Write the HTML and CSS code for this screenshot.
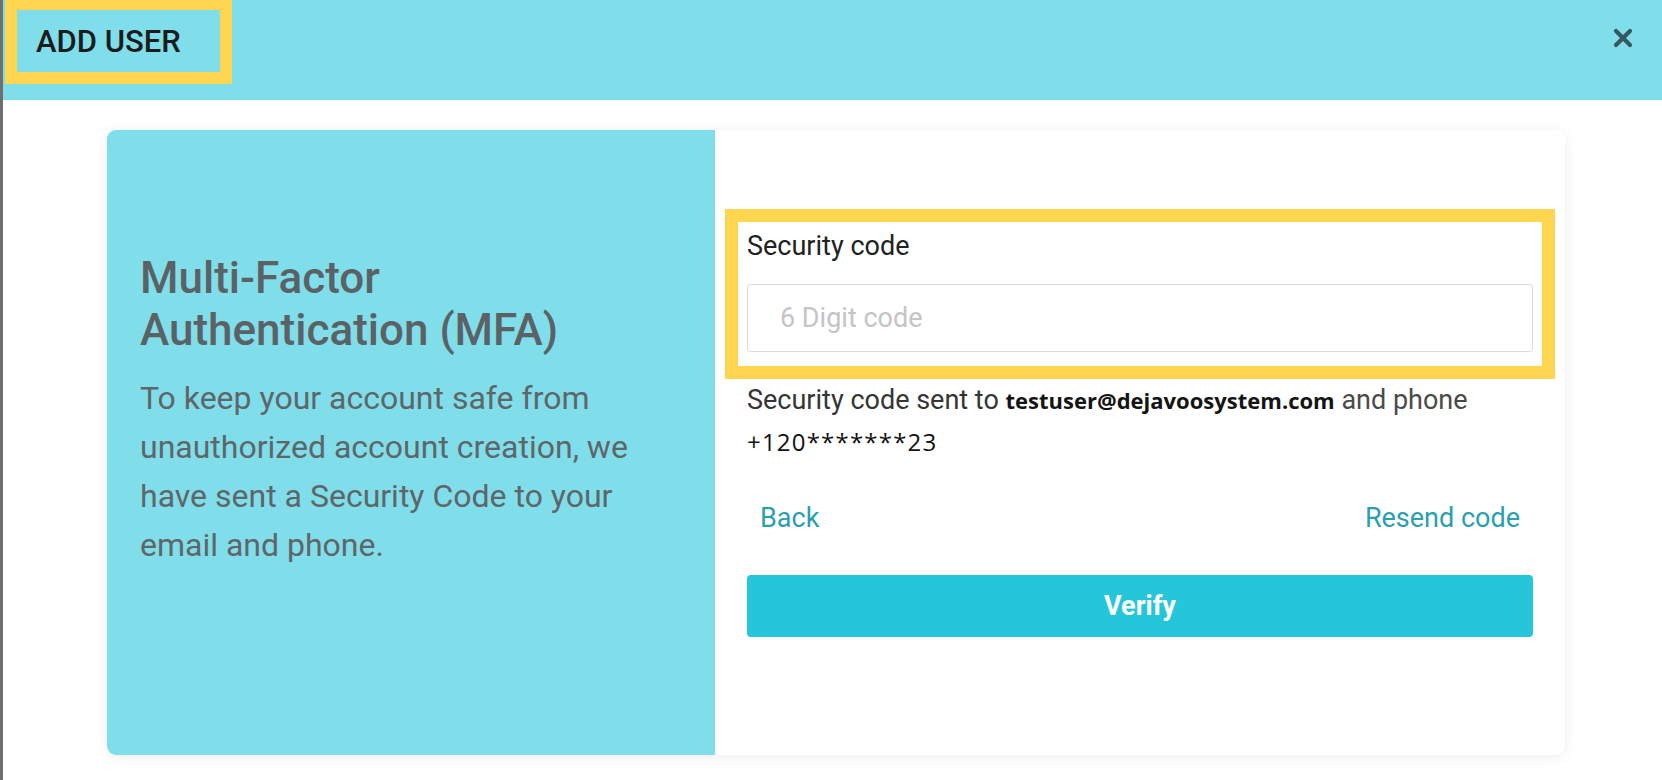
FILE: index.html
```html
<!DOCTYPE html>
<html lang="en">
<head>
    <meta charset="UTF-8">
    <meta name="viewport" content="width=device-width, initial-scale=1.0">
    <title>Add User</title>
    <link rel="stylesheet" href="styles.css">
</head>
<body>
    <div class="modal">
        <header class="modal-header">
            <h1 class="modal-title">ADD USER</h1>
            <button class="close-btn" aria-label="Close">
                <svg width="20" height="20" viewBox="0 0 20 20">
                    <path d="M3 3 L17 17 M17 3 L3 17" stroke="currentColor" stroke-width="4.2" stroke-linecap="round"/>
                </svg>
            </button>
        </header>
        <div class="modal-body">
            <div class="mfa-card">
                <section class="mfa-info">
                    <h2>Multi-Factor Authentication (MFA)</h2>
                    <p>To keep your account safe from unauthorized account creation, we have sent a Security Code to your email and phone.</p>
                </section>
                <section class="mfa-form">
                    <div class="form-group">
                        <label for="code">Security code</label>
                        <input type="text" id="code" placeholder="6 Digit code">
                    </div>
                    <p class="sent-note">Security code sent to <strong>testuser@dejavoosystem.com</strong> <span class="muted">and phone</span> <span class="phone">+120*******23</span></p>
                    <div class="link-row">
                        <a href="#">Back</a>
                        <a href="#">Resend code</a>
                    </div>
                    <button class="verify-btn">Verify</button>
                </section>
            </div>
        </div>
    </div>
</body>
</html>
```

FILE: styles.css
```css
html, body {
    margin: 0;
    height: 780px;
    overflow: hidden;
}
body {
    font-family: Roboto, "Liberation Sans", sans-serif;
    background-color: #fff;
    border-left: 3px solid #6f6f6f;
}
.modal-header {
    height: 100px;
    box-sizing: border-box;
    background-color: #80deea;
    display: flex;
    justify-content: space-between;
    align-items: flex-start;
    padding: 10px 29px 0 14px;
}
.modal-title {
    margin: 0;
    width: 203px;
    height: 62px;
    box-sizing: border-box;
    padding-left: 19px;
    display: flex;
    align-items: center;
    font-size: 31px;
    font-weight: 500;
    color: #1c1c1c;
    outline: 12px solid #fdd54f;
}
.close-btn {
    margin-top: 18px;
    padding: 0;
    border: none;
    background: none;
    color: #37575f;
    width: 20px;
    height: 20px;
    cursor: pointer;
}
.close-btn svg {
    display: block;
}
.modal-body {
    padding: 30px 97px 0 104px;
}
.mfa-card {
    display: flex;
    height: 625px;
    border-radius: 9px;
    background-color: #fff;
    box-shadow: 0 2px 14px rgba(0, 0, 0, 0.07);
    overflow: hidden;
}
.mfa-info {
    width: 608px;
    box-sizing: border-box;
    background-color: #80deea;
    padding: 122px 30px 0 33px;
}
.mfa-info h2 {
    max-width: 470px;
    margin: 0 0 18px 0;
    font-size: 44px;
    line-height: 52px;
    font-weight: 500;
    color: #5b6266;
}
.mfa-info p {
    margin: 0;
    font-size: 32px;
    line-height: 49px;
    color: #5f6669;
}
.mfa-form {
    flex: 1;
    padding: 101px 32px 0 32px;
}
.form-group {
    padding-bottom: 5px;
    outline: 13px solid #fdd54f;
    outline-offset: 9px;
}
.form-group label {
    display: block;
    font-size: 27px;
    line-height: 30px;
    color: #222;
    margin-bottom: 23px;
}
.form-group input {
    display: block;
    width: 100%;
    height: 68px;
    box-sizing: border-box;
    padding: 0 0 0 32px;
    border: 1px solid #dcdcdc;
    border-radius: 3px;
    font-family: Roboto, sans-serif;
    font-size: 27px;
    color: #333;
}
.form-group input::placeholder {
    color: #c4c4c4;
}
.sent-note {
    margin: 23px 0 0 0;
    font-size: 27px;
    line-height: 41px;
    color: #353535;
}
.sent-note strong {
    font-family: "Open Sans", sans-serif;
    font-size: 22px;
    font-weight: 700;
    color: #141414;
}
.sent-note .muted {
    color: #4a4a4a;
}
.sent-note .phone {
    font-family: "Open Sans", sans-serif;
    font-size: 24px;
    letter-spacing: 1.2px;
    color: #111;
}
.link-row {
    display: flex;
    justify-content: space-between;
    margin-top: 39px;
    padding: 0 13px;
}
.link-row a {
    font-size: 27px;
    line-height: 32px;
    color: #2a9fad;
    text-decoration: none;
}
.verify-btn {
    display: block;
    width: 100%;
    height: 62px;
    margin-top: 41px;
    border: none;
    border-radius: 4px;
    background-color: #26c6da;
    color: #fff;
    font-family: Roboto, sans-serif;
    font-size: 27px;
    font-weight: 700;
    cursor: pointer;
}
```
